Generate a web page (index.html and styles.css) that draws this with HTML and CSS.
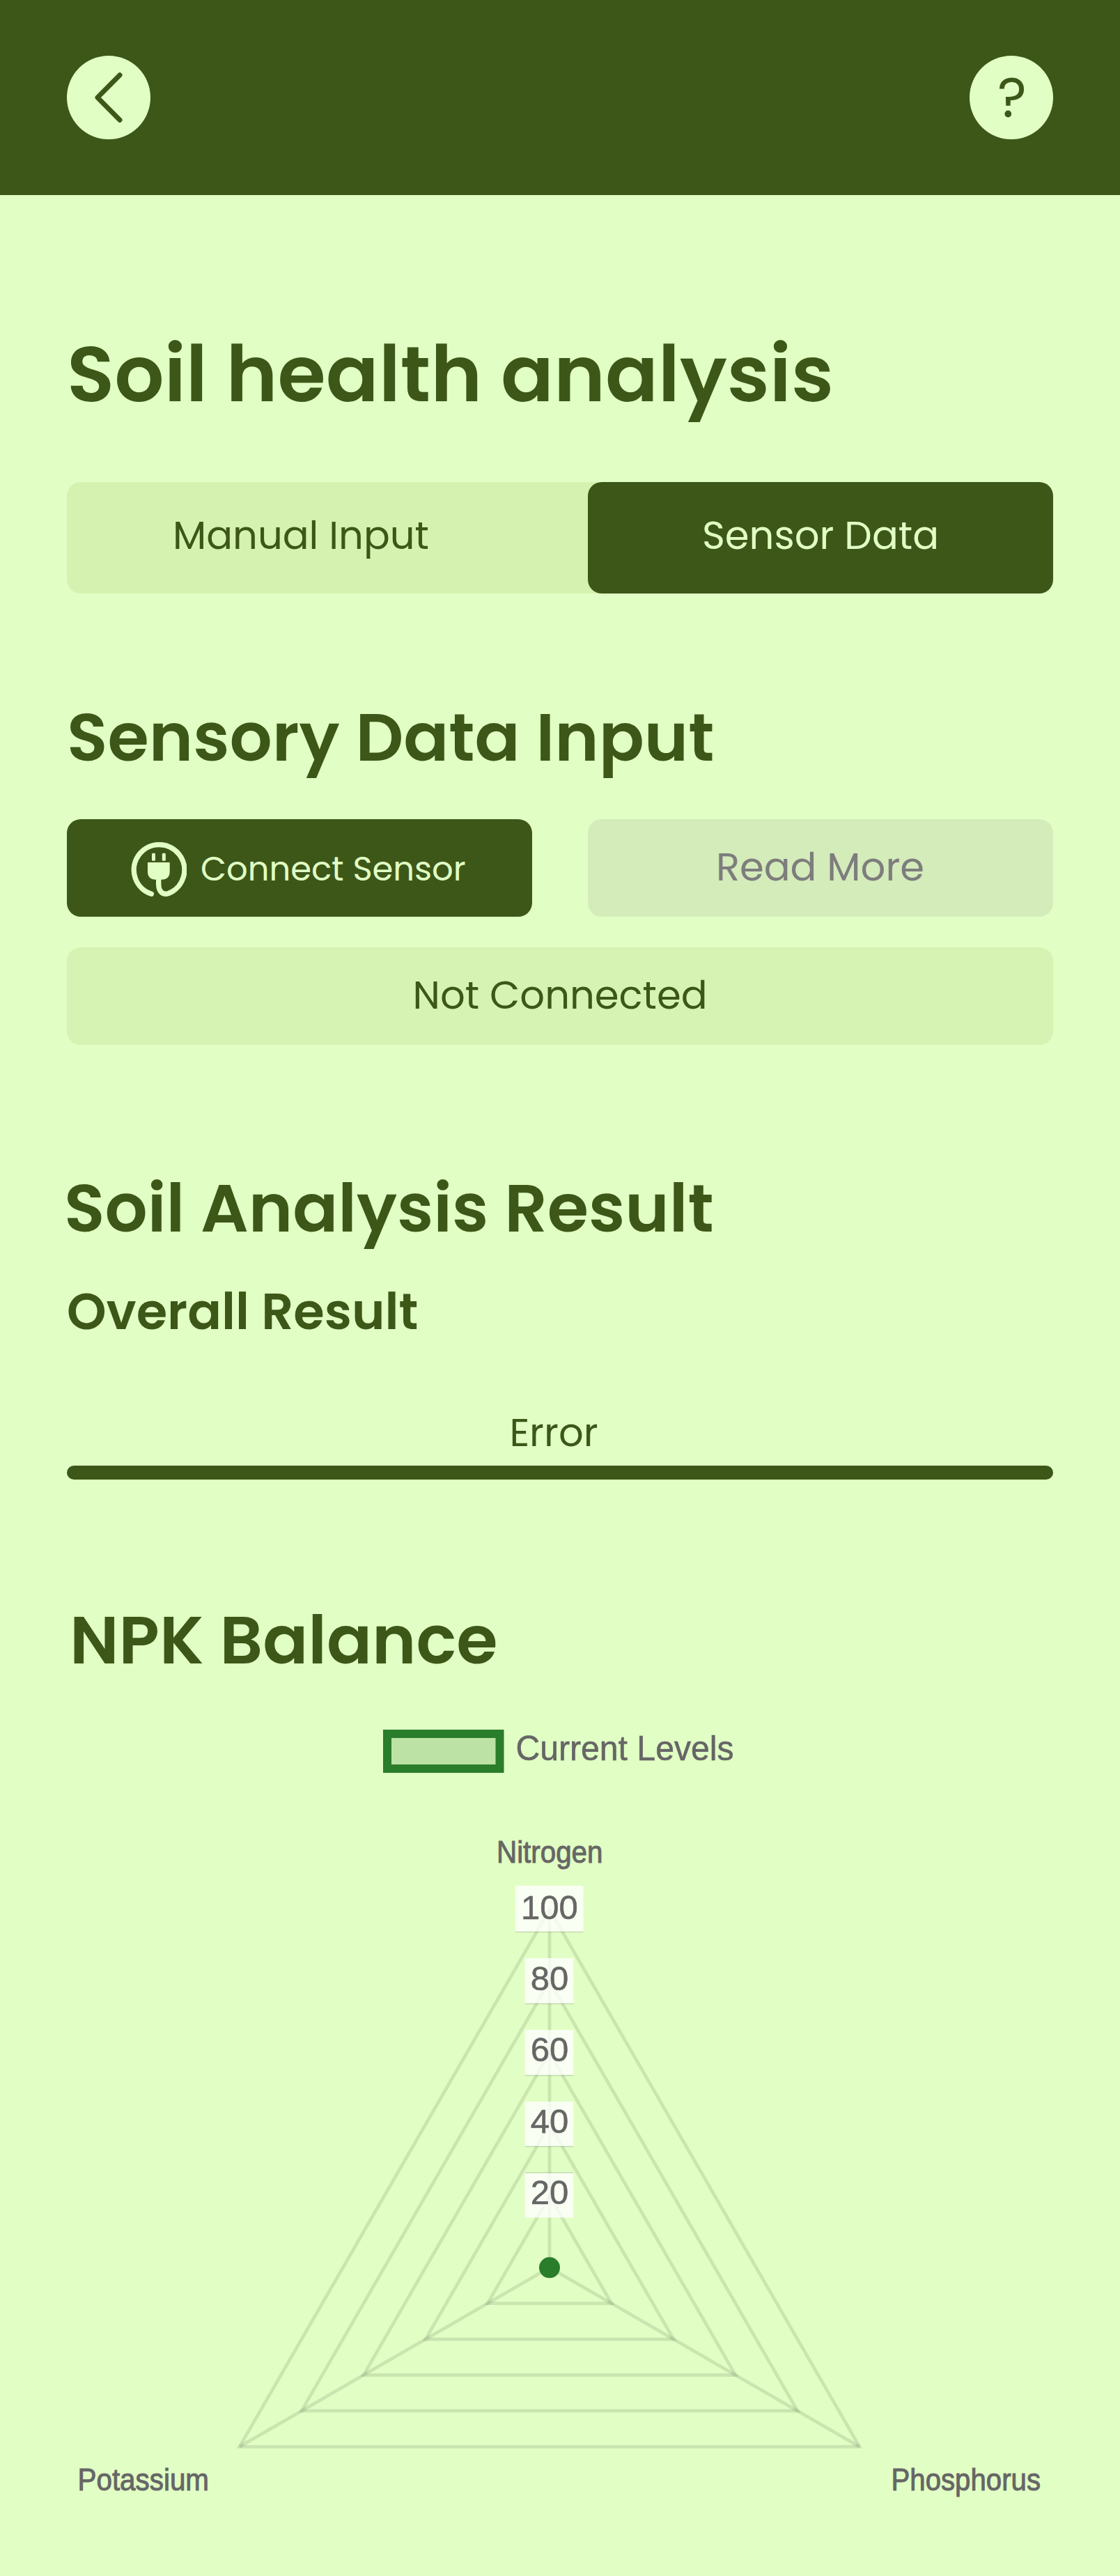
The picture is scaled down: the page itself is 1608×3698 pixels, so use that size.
FILE: index.html
```html
<!DOCTYPE html>
<html lang="en">
<head>
<meta charset="utf-8">
<title>Soil health analysis</title>
<link rel="stylesheet" href="styles.css">
</head>
<body>
<header class="topbar">
  <button class="round" aria-label="Back">
    <svg width="120" height="120" viewBox="0 0 120 120"><path class="chevron" d="M76 27.7 44 60l32 32.3"/></svg>
  </button>
  <button class="round help">?</button>
</header>

<main class="page">
  <h1 class="title">Soil health analysis</h1>
  <nav class="tabs">
    <a class="tab tab-manual">Manual Input</a>
    <a class="tab tab-sensor">Sensor Data</a>
  </nav>

  <h2 class="heading heading-input">Sensory Data Input</h2>
  <div class="actions">
    <button class="btn btn-connect">
      <svg class="plug" width="80" height="80" viewBox="0 0 80 80">
        <path class="cord" d="M29.3 74.3A36.3 36.3 0 1 1 54 73.5C45 76.5 39.7 70 39.7 60V50"/>
        <path class="solid" d="M24 29H55.7V42Q55.7 53.7 44 53.7H35.7Q24 53.7 24 42Z"/>
        <rect class="solid" x="30" y="15.7" width="5" height="11" rx="1.5"/>
        <rect class="solid" x="44.8" y="15.7" width="5" height="11" rx="1.5"/>
      </svg>
      <span>Connect Sensor</span>
    </button>
    <button class="btn btn-read">Read More</button>
  </div>
  <div class="status">Not Connected</div>

  <h2 class="heading heading-result">Soil Analysis Result</h2>
  <h3 class="subheading">Overall Result</h3>
  <p class="error">Error</p>
  <div class="bar"></div>

  <h2 class="heading heading-npk">NPK Balance</h2>
</main>

<svg class="chart" width="1608" height="1270" viewBox="0 0 1608 1270">
  <rect class="key" x="556" y="61" width="161.5" height="50"/>
  <text class="legend" x="740.5" y="99" textLength="313" lengthAdjust="spacingAndGlyphs">Current Levels</text>

  <g class="grid">
    <path d="M789 724.5 878 878.7H700Z"/>
    <path d="M789 621.7 967 930.1H611Z"/>
    <path d="M789 518.9 1056 981.5H522Z"/>
    <path d="M789 416.1 1145 1032.9H433Z"/>
    <path d="M789 313.3 1234 1084.3H344Z"/>
    <path d="M789 827.3V313.3"/>
    <path d="M789 827.3 1234 1084.3"/>
    <path d="M789 827.3 344 1084.3"/>
  </g>
  <circle class="point" cx="789" cy="827.3" r="15"/>

  <g class="tickbox">
    <rect x="740" y="279" width="97.5" height="66"/>
    <rect x="753.5" y="383" width="70" height="65"/>
    <rect x="753.5" y="486" width="70" height="65"/>
    <rect x="753.5" y="589" width="70" height="64"/>
    <rect x="753.5" y="691.5" width="70" height="64"/>
  </g>
  <path class="tickedge" d="M740 345.5H837.5M753.5 448.5H823.5M753.5 551.5H823.5M753.5 653.5H823.5M753.5 691H823.5"/>
  <g class="tick">
    <text x="789" y="326.5">100</text>
    <text x="789" y="429">80</text>
    <text x="789" y="531.3">60</text>
    <text x="789" y="633.7">40</text>
    <text x="789" y="736.3">20</text>
  </g>
  <g class="label">
    <text x="713" y="246" textLength="152.5" lengthAdjust="spacingAndGlyphs">Nitrogen</text>
    <text x="111.5" y="1147" textLength="188.5" lengthAdjust="spacingAndGlyphs">Potassium</text>
    <text x="1279.5" y="1147" textLength="214.5" lengthAdjust="spacingAndGlyphs">Phosphorus</text>
  </g>
</svg>
</body>
</html>
```
FILE: styles.css
```css
:root {
  --dark: #3d5719;
  --light: #e1ffc4;
  --soft: #d5f2b0;
}

* { box-sizing: border-box; margin: 0; padding: 0; }

body {
  background: var(--light);
  color: var(--dark);
  font-family: Poppins, Inter, sans-serif;
  overflow-x: hidden;
}

button { border: 0; font: inherit; color: inherit; }

.topbar {
  display: flex;
  justify-content: space-between;
  align-items: center;
  height: 280px;
  padding: 0 96px;
  background: var(--dark);
}

.round {
  display: flex;
  justify-content: center;
  align-items: center;
  width: 120px;
  height: 120px;
  border-radius: 50%;
  background: var(--light);
  font-size: 80px;
  line-height: 120px;
}

.help { padding-left: 2px; }

.chevron {
  fill: none;
  stroke: var(--dark);
  stroke-width: 7;
  stroke-linecap: round;
  stroke-linejoin: round;
}

.page { padding: 172.5px 96px 0; }

.title {
  font-size: 112px;
  font-weight: 600;
  line-height: 168px;
}

.tabs {
  display: flex;
  justify-content: space-between;
  height: 160px;
  margin-top: 71.5px;
  border-radius: 20px;
  background: var(--soft);
  font-size: 56px;
}

.tab {
  display: flex;
  justify-content: center;
  align-items: center;
  padding-bottom: 7px;
  border-radius: 20px;
}

.tab-manual { width: 672px; }
.tab-sensor { width: 668px; background: var(--dark); color: var(--light); }

.heading { font-size: 96px; font-weight: 600; line-height: 144px; }
.heading-input { margin-top: 134.5px; }
.heading-result { margin: 162.5px 0 0 -4px; }
.heading-npk { margin-top: 158.5px; padding-left: 4px; }

.actions { display: flex; justify-content: space-between; margin-top: 45.5px; }

.btn {
  display: flex;
  align-items: center;
  width: 668px;
  height: 140px;
  border-radius: 20px;
}

.btn-connect {
  gap: 20px;
  padding: 3px 0 0 92px;
  background: var(--dark);
  color: var(--light);
  font-size: 48px;
}

.plug { margin-top: 3px; }

.btn-read {
  justify-content: center;
  padding: 0 1px 3px 0;
  background: #d4ebba;
  color: #7d7d7d;
  font-size: 56px;
}

.cord { fill: none; stroke: var(--light); stroke-width: 7.4; stroke-linecap: round; }
.solid { fill: var(--light); }

.status {
  display: flex;
  justify-content: center;
  align-items: center;
  height: 140px;
  margin-top: 44px;
  padding-bottom: 3px;
  border-radius: 20px;
  background: #d6f3b3;
  font-size: 56px;
}

.subheading {
  margin-top: 22px;
  font-size: 72px;
  font-weight: 600;
  line-height: 108px;
}

.error {
  margin-top: 78px;
  padding-right: 18px;
  font-size: 56px;
  line-height: 84px;
  text-align: center;
}

.bar { height: 20px; margin-top: 5.5px; border-radius: 10px; background: var(--dark); }

.chart {
  display: block;
  margin-top: 1.5px;
  font-family: "Liberation Sans", Arial, sans-serif;
  fill: #666;
}

.key { fill: #bde2a5; stroke: #2a7d2a; stroke-width: 12; }
.legend { font-size: 50px; stroke: #666; stroke-width: 0.6; }
.grid { fill: none; stroke: rgba(0, 0, 0, 0.1); stroke-width: 4.8; }
.point { fill: #2a7d2a; }
.tickbox { fill: rgba(255, 255, 255, 0.78); }
.tickedge { stroke: rgba(0, 0, 0, 0.14); stroke-width: 1.5; }
.tick { font-size: 49px; text-anchor: middle; stroke: #666; stroke-width: 0.6; }
.label { font-size: 44px; stroke: #666; stroke-width: 1; }
```
